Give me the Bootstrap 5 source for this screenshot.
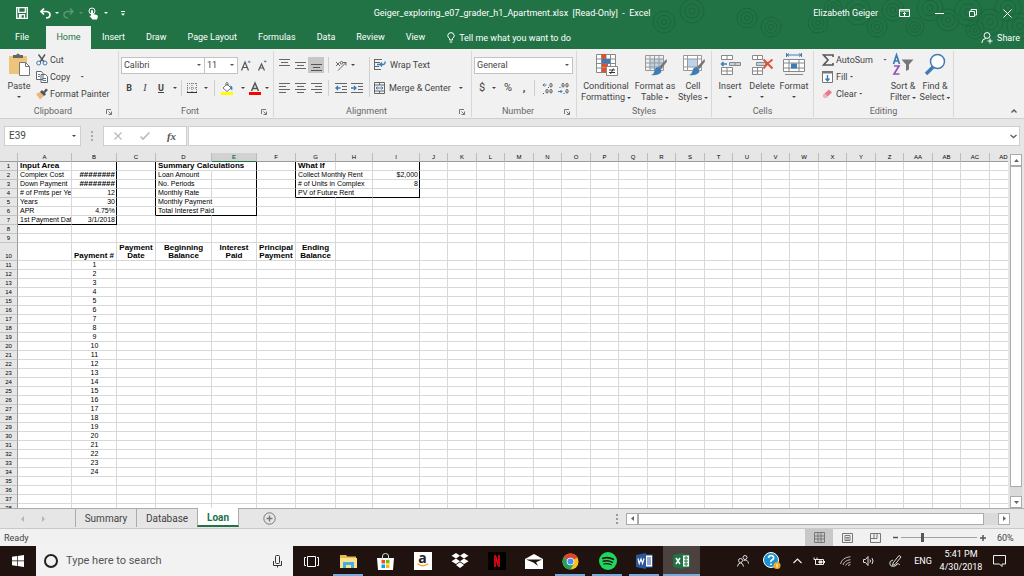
<!DOCTYPE html>
<html lang="en">
<head>
<meta charset="utf-8">
<meta name="viewport" content="width=device-width, initial-scale=1">
<title>Geiger_exploring_e07_grader_h1_Apartment.xlsx - Excel</title>
<link href="https://cdn.jsdelivr.net/npm/bootstrap@5.3.0/dist/css/bootstrap.min.css" rel="stylesheet">
<style>
:root { --green:#217346; --ink:#444; --line:#d2d2d2; }
body { font-family:Roboto,"Open Sans",sans-serif; font-size:9px; line-height:12px; color:var(--ink); background:#e6e6e6; }
button { border:0; background:none; padding:0; color:inherit; font:inherit; line-height:inherit; white-space:nowrap; display:inline-flex; align-items:center; justify-content:center; flex:none; }
svg { display:block; flex:none; overflow:visible; }
.s8 { width:8px } .s12 { width:12px } .s14 { width:14px } .s16 { width:16px } .s20 { width:20px } .s24 { width:24px } .s28 { width:28px } .s34 { width:34px } .s36 { width:36px }
.caret { width:4px; height:2px; background:currentColor; clip-path:polygon(0 0,100% 0,50% 100%); flex:none; display:inline-block; }

.topbar { position:relative; background:var(--green); color:#fff; }
.topbar > div, .topbar > nav { position:relative; }
.rings { position:absolute; right:0; top:0; height:49px; width:380px; overflow:hidden; pointer-events:none; }
.titlebar { height:26px; display:grid; grid-template-columns:1fr auto 1fr; }
.menubar { height:23px; }
.menubar a { color:#fff; text-decoration:none; height:23px; line-height:22px; }
.menubar a.active { background:#f1f1f1; color:var(--green); width:45px; text-align:center; }
.filetab { width:46px; padding-left:15px; }
.menus { gap:21px; padding:0 22px 0 11px; }

.ribbon { background:#f1f1f1; height:70px; border-bottom:1px solid #cfcfcf; }
.group { height:66px; margin-top:2px; border-right:1px solid #d8d8d8; display:flex; flex-direction:column; flex:none; }
.group-body { height:54px; display:flex; padding-left:2px; }
.group-name { height:12px; display:flex; justify-content:center; align-items:end; color:#666; }
.group-name.launch { display:grid; grid-template-columns:1fr 12px; text-align:center; }
.group-name.launch svg { margin-bottom:2px; }
.g-clip { width:119px } .g-font { width:155px } .g-align { width:198px } .g-num { width:105px } .g-style { width:135px } .g-cell { width:102px } .g-edit { width:140px }
.bigbtn { flex-direction:column; justify-content:flex-start; line-height:11px; padding-top:2px; }
.bigbtn svg { margin-bottom:5px; }
.bigbtn .caret { margin-top:4px; }
.bigbtn span .caret { margin:0 0 1px 2px; }
.b32 { width:32px } .b44 { width:44px } .b54 { width:54px }
.stack { display:flex; flex-direction:column; }
.stack button { height:17px; justify-content:flex-start; gap:2px; }
.two { display:flex; flex-direction:column; gap:7px; padding-top:6px; }
.two > div { display:flex; align-items:center; height:16px; }
.vsep { width:1px; height:16px; background:#d0d0d0; flex:none; }
.vsep.tall { height:40px; margin-top:6px; }
.pressed { background:#c6c6c6; height:16px; }
.combo { appearance:none; height:17px; border:1px solid #c3c3c3; border-radius:0; background:#fff url("data:image/svg+xml,%3Csvg xmlns='http://www.w3.org/2000/svg' width='4' height='2'%3E%3Cpath d='M0 0h4L2 2z' fill='%23555'/%3E%3C/svg%3E") no-repeat right 3px center; padding:0 2px; font:inherit; color:var(--ink); }
.combo.name { width:84px } .combo.size { width:34px; margin-left:-1px } .combo.fmt { width:99px }
.glyph { font-size:11px; }
.serif { font-family:"Liberation Serif",serif; font-size:10px; }

.formula { padding:7px 4px 7px; }
.formula .cellbox, .formula .marks, .formula .fx { height:20px; background:#fff; border:1px solid #cfcfcf; }
.formula input { border:0; outline:0; background:none; padding:0 4px; font:inherit; font-size:10px; color:var(--ink); min-width:0; width:100%; }
.cellbox { width:77px; } .marks { width:84px; margin-right:1px; }
.marks button { width:27px; }
.fx { padding-right:2px; }
.fxmark { font:700 11px "Liberation Serif",serif; color:#555; }

.sheetwrap { min-height:0; background:#e6e6e6; }
.sheet { min-width:0; overflow:hidden; background:#fff; }
.cells { table-layout:fixed; border-collapse:separate; border-spacing:0; width:1018px; font-family:"Liberation Sans",sans-serif; font-size:7px; line-height:8px; color:#000; }
.cells th, .cells td { height:9px; padding:0 1px 0 2px; border-right:1px solid #d8d8d8; border-bottom:1px solid #d8d8d8; white-space:nowrap; }
.cells thead th { padding:0; background:#e6e6e6; border-right-color:#bcbcbc; border-bottom-color:#9b9b9b; text-align:center; font-weight:400; font-size:6px; }
.cells thead th.sel { background:#d2d2d2; color:var(--green); font-weight:700; border-bottom-color:var(--green); }
.cells tbody th { background:#e6e6e6; border-right-color:#9b9b9b; border-bottom-color:#c4c4c4; font-weight:400; font-size:6px; text-align:center; padding:0; }
.cells tr.tall > * { height:18px; vertical-align:bottom; white-space:normal; }
.cells td.hd { text-align:center; padding:0; }
.cells td.hd, .cells td.b, .cells td.hash { font-weight:700; font-size:8px; }
.cells td.r { text-align:right; } .cells td.c { text-align:center; }
.cells td.clip { overflow:hidden; }
.cells td.kr { border-right-color:#000; } .cells td.kb { border-bottom-color:#000; } .cells td.open { border-right-color:transparent; }
.vscroll { width:16px; padding:1px 1px 0 2px; display:flex; flex-direction:column; }
.sbtn { width:12px; height:12px; background:#fff; border:1px solid #ababab; }
.vscroll .thumb { background:#fff; border:1px solid #ababab; width:12px; flex:324 0 0; }
.vscroll .track { background:#dadada; flex:9 0 0; width:12px; }

.sheettabs { height:21px; border-top:1px solid #ababab; background:#e6e6e6; border-bottom:1px solid #c9c9c9; font-size:10px; }
.sheettabs a { color:var(--ink); text-decoration:none; height:19px; line-height:20px; text-align:center; }
.sheettabs a.tab { width:61px; border-left:1px solid #ababab; height:18px; }
.sheettabs a.on { width:42px; background:#fff; color:var(--green); font-weight:700; border-bottom:2px solid var(--green); border-left:1px solid #ababab; border-right:1px solid #ababab; margin-top:-1px; }
.sheetnav { width:75px; padding-left:21px; }
.hwrap { padding-right:14px; }
.hscroll { width:384px; height:12px; }
.hscroll .thumb { background:#fff; border:1px solid #ababab; flex:346 0 0; height:12px; }
.hscroll .track { background:#dadada; flex:14 0 0; height:12px; }

.status { height:17px; background:#f1f1f1; }
.view { width:28px; height:17px; } .view.on { background:#c8c8c8; }
.zoomer { appearance:none; width:76px; height:12px; background:linear-gradient(#a0a0a0,#a0a0a0) center/100% 1px no-repeat; }
.zoomer::-webkit-slider-thumb { appearance:none; width:3px; height:9px; background:#555; }
.pct { width:35px; padding-left:8px; }

.taskbar { height:30px; background:#20130f; color:#fff; }
.taskbar .app { width:37px; height:30px; position:relative; }
.taskbar .run::after { content:""; position:absolute; left:3px; right:4px; bottom:0; height:2px; background:#76a9dc; }
.taskbar .front { background:#4b4240; } .taskbar .front::after { left:0; right:0; }
.search { width:257px; background:#f2f2f2; color:#444; padding:0 11px 0 8px; }
.search input { border:0; background:none; outline:0; font:inherit; font-size:11px; min-width:0; padding:0; }
.search input::placeholder { color:#555; opacity:1; }
.amz { width:18px; height:18px; background:#fff; color:#222; font:700 14px/11px "Open Sans",sans-serif; display:flex; flex-direction:column; align-items:center; }
.tray { padding-right:11px; }
.clock { width:48px; line-height:13px; text-align:center; }
</style>
</head>
<body>
<div class="vh-100 d-flex flex-column overflow-hidden">

<header class="topbar flex-shrink-0">
  <svg class="rings" viewBox="644 0 380 49" fill="none" stroke="#1b663b" id="rings"></svg>
  <div class="titlebar">
    <div class="d-flex align-items-center ps-3">
      <button aria-label="Save"><svg width="12" height="12" viewBox="0 0 12 12" fill="none" stroke="#fff" stroke-width="1.300"><path d="M.7.7h10.6v10.6H.7zM2.700.7v4.600h6.600V.7M3.500 11V7.600h5V11M5 8v3"/></svg></button>
      <button class="ms-2 ps-1" aria-label="Undo"><svg width="11" height="11" viewBox="0 0 11 11" fill="none" stroke="#fff" stroke-width="1.700"><path d="M4 .5L1 3.500l3 3M1 3.500h5.500q3.500.3 3.500 3.300T6 10"/></svg></button>
      <button class="s12" aria-label="Undo list"><i class="caret"></i></button>
      <button class="opacity-25" aria-label="Redo"><svg width="11" height="11" viewBox="0 0 11 11" fill="none" stroke="#fff" stroke-width="1.500"><path d="M7 .5l3 3-3 3M10 3.500H4.500Q1 3.800 1 6.800T5 10"/></svg></button>
      <button class="s14 opacity-25" aria-label="Redo list"><i class="caret"></i></button>
      <button aria-label="Touch mode"><svg width="11" height="13" viewBox="0 0 11 13"><circle cx="4" cy="4" r="3" fill="none" stroke="#fff"/><path d="M3 3.500q1-1 2 0V7l4 1q1 .5.8 2L9 12.500H4.500L1.500 9q.5-1 1.500 0z" fill="#fff"/></svg></button>
      <button class="s14" aria-label="Touch list"><i class="caret"></i></button>
      <button class="s20" aria-label="Customize"><svg width="4" height="5" viewBox="0 0 4 5" fill="#fff"><path d="M0 0h4v1H0zM0 2.500h4L2 4.700z"/></svg></button>
    </div>
    <div class="d-flex align-items-center">Geiger_exploring_e07_grader_h1_Apartment.xlsx&nbsp; [Read-Only]&nbsp; -&nbsp; Excel</div>
    <div class="d-flex align-items-center justify-content-end">
      <span class="pe-1">Elizabeth Geiger</span>
      <button class="s36 ms-1" aria-label="Ribbon display"><svg width="11" height="8" viewBox="0 0 11 8" fill="none" stroke="#fff"><path d="M.5.5h10v7H.5zM.5 2h10M5.500 7V3.500M4 5l1.500-1.500L7 5"/></svg></button>
      <button class="s34" aria-label="Minimize"><svg width="9" height="9" viewBox="0 0 9 9" stroke="#fff"><path d="M0 4.500h9"/></svg></button>
      <button class="s34" aria-label="Restore"><svg width="8" height="8" viewBox="0 0 8 8" fill="none" stroke="#fff"><path d="M.5 2.500h5v5h-5zM2 2V.5h5.500V6H6"/></svg></button>
      <button class="s34" aria-label="Close"><svg width="9" height="9" viewBox="0 0 9 9" stroke="#fff"><path d="M.5.5l8 8M8.500.5l-8 8"/></svg></button>
    </div>
  </div>
  <nav class="menubar d-flex">
    <a href="#" class="filetab">File</a>
    <a href="#" class="active">Home</a>
    <div class="d-flex menus"><a href="#">Insert</a><a href="#">Draw</a><a href="#">Page Layout</a><a href="#">Formulas</a><a href="#">Data</a><a href="#">Review</a><a href="#">View</a></div>
    <a href="#" class="d-flex align-items-center gap-1"><svg width="8" height="11" viewBox="0 0 8 11" fill="none" stroke="#fff"><path d="M2.500 8V6.500Q.5 5 .8 3.300 1.300.7 4 .6q2.700.1 3.200 2.700Q7.500 5 5.500 6.500V8zM2.700 10h2.600"/></svg>Tell me what you want to do</a>
    <a href="#" class="ms-auto pe-1 d-flex align-items-center gap-1"><svg width="12" height="12" viewBox="0 0 12 12" fill="none" stroke="#fff"><circle cx="6" cy="3.500" r="2.900"/><path d="M.8 11q.2-4 4-4.600M6.500 9h5M9 6.500v5"/></svg>Share</a>
  </nav>
</header>

<section class="ribbon d-flex flex-shrink-0 overflow-hidden">
  <div class="group g-clip">
    <div class="group-body">
      <button class="bigbtn s34"><svg width="22" height="23" viewBox="0 0 22 23"><path d="M1 3h18v18H1z" fill="#ecc57c"/><path d="M5 2h3q2-3 4 0h3v3H5z" fill="#666"/><path d="M11.500 9.500h6l4 4v9h-10z" fill="#fff" stroke="#777"/><path d="M17.500 9.500v4h4" fill="none" stroke="#777"/></svg>Paste<i class="caret"></i></button>
      <div class="stack ps-0 ms-0">
        <button><svg width="12" height="12" viewBox="0 0 12 12" fill="none"><path d="M2.500.5L8 8M9 .5L4 8" stroke="#555" stroke-width="1.400"/><circle cx="2.700" cy="9" r="2" stroke="#3f7cb5"/><circle cx="9" cy="9" r="2" stroke="#3f7cb5"/></svg>Cut</button>
        <button><svg width="12" height="12" viewBox="0 0 12 12" fill="#fff" stroke="#666"><path d="M.5.5h5l1.500 2v6H.5zM5 3.500h4.500l2 2v6H5z"/><path d="M2 3.500h2M2 5.500h2M6.500 7.500H10M6.500 9.500H10" stroke="#3f7cb5"/></svg>Copy<i class="caret ms-2"></i></button>
        <button><svg width="12" height="12" viewBox="0 0 12 12"><path d="M0 6l4-2 4 4-4 3.500z" fill="#ecb97a"/><path d="M4 4l2-2 1.500 1.500L10 .5 12 2 9 5l1 1.500L8 8z" fill="#555"/></svg>Format Painter</button>
      </div>
    </div>
    <div class="group-name launch">Clipboard<svg width="6" height="6" viewBox="0 0 6 6" fill="none" stroke="#777"><path d="M.5 5V.5H5M2.500 2.500l3 3M5.500 2.500v3h-3"/></svg></div>
  </div>

  <div class="group g-font">
    <div class="group-body">
      <div class="two">
        <div><select class="combo name" aria-label="Font"><option>Calibri</option></select><select class="combo size" aria-label="Font size"><option>11</option></select>
          <button class="s16" aria-label="Grow font"><svg width="10" height="11" viewBox="0 0 10 11" fill="none" stroke="#555" stroke-width="1.200"><path d="M.5 10.500L4 2l3.500 8.500M2 7.500h4"/><path d="M6.500 2.500l1.700-2 1.700 2z" fill="#3f7cb5" stroke="none"/></svg></button>
          <button class="s16" aria-label="Shrink font"><svg width="9" height="11" viewBox="0 0 9 11" fill="none" stroke="#555" stroke-width="1.200"><path d="M.5 10.500L3.500 4l3 6.500M2 8h3"/><path d="M5.500.7h3.400L7.200 2.700z" fill="#3f7cb5" stroke="none"/></svg></button></div>
        <div><button class="s16 fw-bold">B</button><button class="s16 fst-italic"><span class="serif">I</span></button><button class="s16 fw-bold text-decoration-underline">U</button><button class="s12" aria-label="Underline list"><i class="caret"></i></button><span class="vsep"></span>
          <button class="s20" aria-label="Borders"><svg width="10" height="10" viewBox="0 0 10 10" fill="none" stroke="#777" stroke-dasharray="1 1"><path d="M.5 0v9M5 0v9M9.500 0v9M0 .5h10M0 5h10"/><path d="M0 9.500h10" stroke="#333" stroke-dasharray="none"/></svg></button><button class="s8" aria-label="Border list"><i class="caret"></i></button><span class="vsep ms-1"></span>
          <button class="s24" aria-label="Fill color"><svg width="12" height="13" viewBox="0 0 12 13"><path d="M2 6l4-4 4 4-4 3.500zM5 4V1q1-1 2 0v3" fill="#fff" stroke="#777"/><path d="M9.500 3.500q3 1 1.500 5L9 6z" fill="#3f7cb5"/><path d="M0 10h12v3H0z" fill="#ff0"/></svg></button><button class="s8" aria-label="Fill list"><i class="caret"></i></button>
          <button class="s16" aria-label="Font color"><svg width="12" height="13" viewBox="0 0 12 13"><path d="M2.500 9L6 1l3.500 8M4 6.500h4" fill="none" stroke="#555" stroke-width="1.500"/><path d="M0 10h12v3H0z" fill="red"/></svg></button><button class="s8" aria-label="Color list"><i class="caret"></i></button></div>
      </div>
    </div>
    <div class="group-name launch">Font<svg width="6" height="6" viewBox="0 0 6 6" fill="none" stroke="#777"><path d="M.5 5V.5H5M2.500 2.500l3 3M5.500 2.500v3h-3"/></svg></div>
  </div>

  <div class="group g-align">
    <div class="group-body">
      <div class="two">
        <div><button class="s16" aria-label="Top"><svg width="11" height="12" viewBox="0 0 11 12" stroke="#666"><path d="M0 .5h11M2 3.500h7M0 6.500h11"/></svg></button><button class="s16" aria-label="Middle"><svg width="11" height="12" viewBox="0 0 11 12" stroke="#666"><path d="M0 3.500h11M2 6.500h7M0 9.500h11"/></svg></button><button class="s16 pressed" aria-label="Bottom"><svg width="11" height="12" viewBox="0 0 11 12" stroke="#555"><path d="M0 5.500h11M2 8.500h7M0 11.500h11"/></svg></button><span class="vsep mx-1"></span>
          <button class="s16" aria-label="Orientation"><svg width="12" height="11" viewBox="0 0 12 11" fill="none" stroke="#666"><path d="M3 10.500L11 2.500M8 2.500h3v3M1 2l4 4M1 6l3.500-3.500"/><circle cx="6.500" cy="2.800" r="1.300"/></svg></button><button class="s8" aria-label="Orientation list"><i class="caret"></i></button></div>
        <div><button class="s16" aria-label="Left"><svg width="11" height="10" viewBox="0 0 11 10" stroke="#666"><path d="M0 .5h11M0 3.500h7M0 6.500h11M0 9.500h7"/></svg></button><button class="s16" aria-label="Center"><svg width="11" height="10" viewBox="0 0 11 10" stroke="#666"><path d="M0 .5h11M2 3.500h7M0 6.500h11M2 9.500h7"/></svg></button><button class="s16" aria-label="Right"><svg width="11" height="10" viewBox="0 0 11 10" stroke="#666"><path d="M0 .5h11M4 3.500h7M0 6.500h11M4 9.500h7"/></svg></button><span class="vsep mx-1"></span>
          <button class="s16" aria-label="Decrease indent"><svg width="12" height="10" viewBox="0 0 12 10" fill="none" stroke="#666"><path d="M0 .5h12M7 3.500h5M7 6.500h5M0 9.500h12"/><path d="M5.500 5H1M3 3L1 5l2 2" stroke="#3f7cb5" stroke-width="1.300"/></svg></button><button class="s16" aria-label="Increase indent"><svg width="12" height="10" viewBox="0 0 12 10" fill="none" stroke="#666"><path d="M0 .5h12M7 3.500h5M7 6.500h5M0 9.500h12"/><path d="M0 5h5M3 3l2 2-2 2" stroke="#3f7cb5" stroke-width="1.300"/></svg></button></div>
      </div>
      <span class="vsep tall mx-1"></span>
      <div class="two">
        <div><button class="gap-1"><svg width="12" height="12" viewBox="0 0 12 12" fill="none" stroke="#666"><path d="M.5 0v11M0 .5h8M0 3.500h6M0 7.500h5M0 10.500h7"/><path d="M3 5.500h6.500q2-.5 1.500-3M8 7.500l-2-2 2-2" stroke="#3f7cb5" stroke-width="1.300"/></svg>Wrap Text</button></div>
        <div><button class="gap-1"><svg width="11" height="12" viewBox="0 0 11 12" fill="none" stroke="#666"><path d="M.5.5h10v11H.5zM.5 3h10M.5 9h10M5.500.5V3M5.500 9v2.500"/><path d="M2 6h7M3.500 4.500L2 6l1.500 1.500M7.500 4.500L9 6 7.500 7.500" stroke="#3f7cb5"/></svg>Merge &amp; Center<i class="caret ms-1"></i></button></div>
      </div>
    </div>
    <div class="group-name launch">Alignment<svg width="6" height="6" viewBox="0 0 6 6" fill="none" stroke="#777"><path d="M.5 5V.5H5M2.500 2.500l3 3M5.500 2.500v3h-3"/></svg></div>
  </div>

  <div class="group g-num">
    <div class="group-body">
      <div class="two">
        <div><select class="combo fmt" aria-label="Number format"><option>General</option></select></div>
        <div><button class="s16 glyph">$</button><button class="s8" aria-label="Currency list"><i class="caret"></i></button><button class="s20 glyph">%</button><button class="s12 glyph fw-bold">,</button><span class="vsep mx-1"></span>
          <button class="s16" aria-label="Increase decimal"><svg width="11" height="11" viewBox="0 0 11 11" fill="none" stroke="#555"><path d="M4.500 2H.8M2.500.5L1 2l1.500 1.500" stroke="#3f7cb5"/><rect x="8" y=".5" width="2" height="3.500" rx="1"/><path d="M6 4.500h1M1 10.500h1"/><rect x="4" y="6.500" width="2" height="3.500" rx="1"/><rect x="8" y="6.500" width="2" height="3.500" rx="1"/></svg></button><button class="s16" aria-label="Decrease decimal"><svg width="11" height="11" viewBox="0 0 11 11" fill="none" stroke="#555"><path d="M0 8.500h4M2.500 7L4 8.500 2.500 10" stroke="#3f7cb5"/><rect x="4" y=".5" width="2" height="3.500" rx="1"/><rect x="8" y=".5" width="2" height="3.500" rx="1"/><path d="M1.500 4.500h1M5.500 10.500h1"/><rect x="8" y="6.500" width="2" height="3.500" rx="1"/></svg></button></div>
      </div>
    </div>
    <div class="group-name launch">Number<svg width="6" height="6" viewBox="0 0 6 6" fill="none" stroke="#777"><path d="M.5 5V.5H5M2.500 2.500l3 3M5.500 2.500v3h-3"/></svg></div>
  </div>

  <div class="group g-style">
    <div class="group-body">
      <button class="bigbtn b54"><svg width="23" height="23" viewBox="0 0 23 23"><path d="M1.500 1.500h19v18h-19zM6.500 1.500v18M11 1.500v18M15.500 1.500v18M1.500 6h19M1.500 10.500h19M1.500 15h19" fill="#fff" stroke="#888"/><path d="M7 1h4v5H7zM7 10.500h6v4H7zM7 15h4v4.500H7z" fill="#e0512f"/><path d="M7 6h8v4.500H7z" fill="#3f7cb5"/><path d="M11.500 13.500h11v9h-11z" fill="#fff" stroke="#888"/><path d="M14 17h6M14 19.500h6M18.500 15.500l-3 5.500" stroke="#333"/></svg><span>Conditional</span><span>Formatting<i class="caret"></i></span></button>
      <button class="bigbtn b44"><svg width="23" height="23" viewBox="0 0 23 23"><path d="M5.500 6h13v10h-13z" fill="#bcd3ea"/><path d="M1.500 2.500h18v15h-18zM6 2.500v15M10.500 2.500v15M15 2.500v15M1.500 6h18M1.500 10h18M1.500 14h18" fill="none" stroke="#999"/><path d="M22.500 6L15 14l2 2.500 6-8z" fill="#777"/><path d="M15 14q-4 0-4.500 4Q10 21 7 22q6 1 9-1.500 2-2 1-4z" fill="#3f7cb5"/></svg><span>Format as</span><span>Table<i class="caret"></i></span></button>
      <button class="bigbtn b32"><svg width="23" height="23" viewBox="0 0 23 23"><path d="M1.500 2.500h18v15h-18z" fill="#fff"/><path d="M5.500 6h10v8h-10z" fill="#bcd3ea"/><path d="M1.500 2.500h18v15h-18zM5.500 2.500v15M15.500 2.500v15M1.500 6h18M1.500 14h18" fill="none" stroke="#999"/><path d="M22.500 6L15 14l2 2.500 6-8z" fill="#777"/><path d="M15 14q-4 0-4.500 4Q10 21 7 22q6 1 9-1.500 2-2 1-4z" fill="#3f7cb5"/></svg><span>Cell</span><span>Styles<i class="caret"></i></span></button>
    </div>
    <div class="group-name">Styles</div>
  </div>

  <div class="group g-cell">
    <div class="group-body">
      <button class="bigbtn b32"><svg width="22" height="23" viewBox="0 0 22 23" fill="#fff" stroke="#888"><path d="M2.500 2.500h11v4h-11zM8 2.500v4M2.500 14.500h11v7h-11zM8 14.500v7M2.500 18h11"/><path d="M10.500 9.500h11v3h-11zM16 9.500v3" fill="#bcd3ea"/><path d="M8 11H2.500M4.500 9L2.500 11l2 2" fill="none" stroke="#3f7cb5" stroke-width="1.500"/></svg>Insert<i class="caret"></i></button>
      <button class="bigbtn b32"><svg width="22" height="23" viewBox="0 0 22 23" fill="#fff" stroke="#888"><path d="M1.500 2.500h10v4h-10zM6.500 2.500v4M1.500 14.500h10v7h-10zM6.500 14.500v7M1.500 18h10"/><path d="M5.500 9.500h9v3h-9z" fill="#bcd3ea"/><path d="M12.500 6.500l9 9M21.500 6.500q-6 4-9 9" fill="none" stroke="#e0512f" stroke-width="2"/></svg>Delete<i class="caret"></i></button>
      <button class="bigbtn b32"><svg width="22" height="23" viewBox="0 0 22 23" fill="#fff" stroke="#888"><path d="M.5 6.500h21v12H.5zM.5 10h21M.5 15h21M6 6.500v12M16 6.500v12M2 21.500h18"/><path d="M8 10.500h6v5H8z" fill="#3f7cb5" stroke="none"/><path d="M3 2h16M3.500 0v4M18.500 0v4M6 .5L4 2l2 1.500M16 .5L18 2l-2 1.500" fill="none" stroke="#3f7cb5"/></svg>Format<i class="caret"></i></button>
    </div>
    <div class="group-name">Cells</div>
  </div>

  <div class="group g-edit">
    <div class="group-body ps-1">
      <div class="stack ps-1">
        <button><svg width="12" height="12" viewBox="0 0 12 12" fill="none" stroke="#555" stroke-width="1.600"><path d="M11 3V1H1.500L6 6l-4.500 5H11V9"/></svg>AutoSum<i class="caret ms-2"></i></button>
        <button><svg width="12" height="12" viewBox="0 0 12 12"><path d="M.5 1.500h10v10H.5z" fill="#fff" stroke="#777"/><path d="M0 0h11v2.500H0z" fill="#777"/><path d="M5.500 4v6M3.500 7.500l2 2.500 2-2.500" fill="none" stroke="#3f7cb5" stroke-width="1.400"/></svg>Fill<i class="caret"></i></button>
        <button><svg width="12" height="12" viewBox="0 0 12 12"><path d="M1 7l6-5.500 3 3L4 10H2.500L1 8.500z" fill="#e8798c"/><path d="M1 7l2-1.500 3 3L4 10H2.500L1 8.500z" fill="#f3b4be"/></svg>Clear<i class="caret"></i></button>
      </div>
      <button class="bigbtn b32 ms-auto"><svg width="22" height="23" viewBox="0 0 22 23" fill="none" stroke-width="1.700"><path d="M1.500 11L4.500 2l3 9M2.500 8h4" stroke="#3f7cb5"/><path d="M2 13h5l-5 8h5.500" stroke="#9154b5"/><path d="M9.500 6.500h12l-4.500 5v5l-3 1.500v-6.500z" fill="#777"/></svg><span>Sort &amp;</span><span>Filter<i class="caret"></i></span></button>
      <button class="bigbtn b32 me-1"><svg width="22" height="23" viewBox="0 0 22 23"><path d="M9 14l-7 7" stroke="#3f7cb5" stroke-width="3.500"/><circle cx="13.500" cy="8.500" r="7" fill="#fff" stroke="#3f7cb5" stroke-width="1.500"/></svg><span>Find &amp;</span><span>Select<i class="caret"></i></span></button>
    </div>
    <div class="group-name">Editing</div>
  </div>
  <button class="ms-auto align-self-end s20" aria-label="Collapse ribbon"><svg width="6" height="12" viewBox="0 0 6 12" fill="none" stroke="#555" stroke-width="1.300"><path d="M.5 6.500L3 4l2.500 2.500"/></svg></button>
</section>

<div class="formula d-flex align-items-center flex-shrink-0">
  <div class="cellbox d-flex align-items-center pe-1"><input aria-label="Name box" value="E39"><i class="caret"></i></div>
  <svg width="22" height="12" viewBox="0 0 22 12" fill="#aaa"><path d="M10 1h2v2h-2zM10 5h2v2h-2zM10 9h2v2h-2z"/></svg>
  <div class="marks d-flex">
    <button aria-label="Cancel"><svg width="8" height="8" viewBox="0 0 8 8" stroke="#bbb" stroke-width="1.400"><path d="M.5.5l7 7M7.500.5l-7 7"/></svg></button>
    <button aria-label="Enter"><svg width="10" height="8" viewBox="0 0 10 8" fill="none" stroke="#bbb" stroke-width="1.600"><path d="M.5 4.500L3 7 9.500.5"/></svg></button>
    <button aria-label="Insert function"><span class="fxmark"><i>fx</i></span></button>
  </div>
  <div class="fx d-flex align-items-center flex-grow-1"><input aria-label="Formula"><svg width="7" height="5" viewBox="0 0 7 5" fill="none" stroke="#666" stroke-width="1.500"><path d="M.5 1l3 2.500 3-2.500"/></svg></div>
</div>

<main class="sheetwrap d-flex flex-grow-1">
  <div class="sheet flex-grow-1"><table class="cells" id="cells"></table></div>
  <div class="vscroll">
    <button class="sbtn" aria-label="Scroll up"><svg width="5" height="3" viewBox="0 0 5 3" fill="#666"><path d="M0 3h5L2.500 0z"/></svg></button>
    <div class="thumb"></div><div class="track"></div>
    <button class="sbtn" aria-label="Scroll down"><svg width="5" height="3" viewBox="0 0 5 3" fill="#666"><path d="M0 0h5L2.500 3z"/></svg></button>
  </div>
</main>

<div class="sheettabs d-flex flex-shrink-0">
  <div class="sheetnav d-flex align-items-center"><svg width="24" height="6" viewBox="0 0 24 6" fill="#b5b5b5"><path d="M3 0v6L0 3zM21 0v6l3-3z"/></svg></div>
  <a href="#" class="tab">Summary</a><a href="#" class="tab">Database</a><a href="#" class="on">Loan</a>
  <button class="px-4" aria-label="New sheet"><svg width="13" height="13" viewBox="0 0 13 13" fill="none" stroke="#777"><circle cx="6.500" cy="6.500" r="5.700"/><path d="M3.500 6.500h6M6.500 3.500v6" stroke-width="1.400"/></svg></button>
  <div class="ms-auto d-flex align-items-center hwrap">
    <svg width="2" height="10" viewBox="0 0 2 10" class="me-2" fill="#999"><path d="M0 0h2v2H0zM0 4h2v2H0zM0 8h2v2H0z"/></svg>
    <div class="hscroll d-flex">
      <button class="sbtn" aria-label="Scroll left"><svg width="3" height="5" viewBox="0 0 3 5" fill="#666"><path d="M3 0v5L0 2.500z"/></svg></button>
      <div class="thumb"></div><div class="track"></div>
      <button class="sbtn" aria-label="Scroll right"><svg width="3" height="5" viewBox="0 0 3 5" fill="#666"><path d="M0 0v5l3-2.500z"/></svg></button>
    </div>
  </div>
</div>

<div class="status d-flex align-items-center flex-shrink-0">
  <span class="ps-1 me-auto">Ready</span>
  <button class="view on" aria-label="Normal"><svg width="11" height="11" viewBox="0 0 11 11" fill="none" stroke="#777"><path d="M.5.5h10v10H.5zM.5 4h10M.5 7h10M4 .5v10M7 .5v10"/></svg></button>
  <button class="view" aria-label="Page layout"><svg width="11" height="10" viewBox="0 0 11 10" fill="none" stroke="#777"><path d="M.5.5h10v9H.5zM3 2.500h5v5H3zM4 4.500h3M4 6h3"/></svg></button>
  <button class="view" aria-label="Page break"><svg width="11" height="10" viewBox="0 0 11 10" fill="none" stroke="#777"><path d="M.5.5h10v9H.5zM.5 5.500h6.500V.5M4 .5v5"/></svg></button>
  <button class="s12" aria-label="Zoom out"><svg width="5" height="5" viewBox="0 0 5 5" stroke="#555" stroke-width="1.500"><path d="M0 2.500h5"/></svg></button>
  <input class="zoomer" type="range" min="0" max="100" value="28" aria-label="Zoom">
  <button class="s12" aria-label="Zoom in"><svg width="6" height="6" viewBox="0 0 6 6" stroke="#555" stroke-width="1.500"><path d="M0 3h6M3 0v6"/></svg></button>
  <span class="pct">60%</span>
</div>

<footer class="taskbar d-flex flex-shrink-0">
  <button class="s36" aria-label="Start"><svg width="12" height="12" viewBox="0 0 12 12" fill="#fff"><path d="M0 1.700L5 1v4.600H0zM5.700.9L12 0v5.600H5.700zM0 6.300h5V11l-5-.7zM5.700 6.300H12V12l-6.300-.9z"/></svg></button>
  <label class="search d-flex align-items-center"><svg class="me-2" width="14" height="14" viewBox="0 0 14 14" fill="none"><circle cx="7" cy="7" r="6" stroke="#222" stroke-width="2"/></svg><input class="flex-grow-1" placeholder="Type here to search" aria-label="Search"><svg width="9" height="13" viewBox="0 0 9 13" fill="none" stroke="#333"><rect x="2.500" y=".5" width="4" height="8" rx="1"/><path d="M.5 6v4.500h8V6M4.500 10.500v2"/></svg></label>
  <button class="app" aria-label="Task view"><svg width="15" height="11" viewBox="0 0 15 11" fill="none" stroke="#fff"><path d="M3.500.5h8v10h-8zM2 1.500H.5v8H2M13 1.500h1.500v8H13"/></svg></button>
  <button class="app run" aria-label="File Explorer"><svg width="17" height="15" viewBox="0 0 17 15"><path d="M0 1h6l1.500 1.500H16V14H0z" fill="#e9b94a"/><path d="M0 4h17v10H0z" fill="#fbe08d"/><path d="M3 14V8h11v6h-3v-3H6v3z" fill="#43b0e4"/></svg></button>
  <button class="app" aria-label="Store"><svg width="17" height="17" viewBox="0 0 17 17"><path d="M0 5h17l-1 12H1z" fill="#fff"/><path d="M5.500 7V3q0-2.500 3-2.500t3 2.500v4" fill="none" stroke="#ddd"/><path d="M4.500 7h3.500v3.500H4.500z" fill="#f25022"/><path d="M9 7h3.500v3.500H9z" fill="#7fba00"/><path d="M4.500 11.500h3.500V15H4.500z" fill="#00a4ef"/><path d="M9 11.500h3.500V15H9z" fill="#ffb900"/></svg></button>
  <button class="app" aria-label="Amazon"><span class="amz">a<svg width="12" height="4" viewBox="0 0 12 4" fill="none" stroke="#f90" stroke-width="1.300"><path d="M.5.8q5.500 4 10.500 0"/></svg></span></button>
  <button class="app" aria-label="Dropbox"><svg width="18" height="16" viewBox="0 0 18 16" fill="#fff"><path d="M5 0l4 2.700-4 2.800L.5 2.700zM13 0l4.500 2.700L13 5.500 9 2.700zM5 5.500l4 2.800-4 2.700L.5 8.300zM13 5.500l4.500 2.800L13 11 9 8.300zM5 12l4-2.700 4 2.700-4 3z"/></svg></button>
  <button class="app" aria-label="Netflix"><svg width="18" height="18" viewBox="0 0 18 18"><path d="M0 0h18v18H0z" fill="#000"/><path d="M6 3h2l4 12h-2z" fill="#e50914"/><path d="M6 3h2v12H6zM10 3h2v12h-2z" fill="#c4070f"/></svg></button>
  <button class="app" aria-label="Mail"><svg width="18" height="15" viewBox="0 0 18 15"><path d="M0 5l9-5 9 5v10H0z" fill="#fff"/><path d="M1 5.500h16L9.500 9z" fill="#20130f"/><path d="M10 6l3 6-4-3z" fill="#20130f"/></svg></button>
  <button class="app run" aria-label="Chrome"><svg width="17" height="17" viewBox="0 0 18 18"><circle cx="9" cy="9" r="8.500" fill="#fbc116"/><path d="M9 9L1.600 4.800A8.500 8.500 0 0 1 16.400 4.800z" fill="#df4332"/><path d="M9 9L1.600 4.800A8.500 8.500 0 0 0 9 17.500l3.700-6.400z" fill="#25a05c"/><path d="M9 5h7.500l-.5-1.500H9z" fill="#df4332"/><circle cx="9" cy="9" r="4" fill="#fff"/><circle cx="9" cy="9" r="3.200" fill="#4a8af4"/></svg></button>
  <button class="app run" aria-label="Spotify"><svg width="18" height="18" viewBox="0 0 18 18" fill="none" stroke="#20130f" stroke-linecap="round"><circle cx="9" cy="9" r="9" fill="#1ed760" stroke="none"/><path d="M3.800 6.300q5.500-1.600 10.500 1" stroke-width="1.800"/><path d="M4.300 9.300q4.700-1.300 9 1" stroke-width="1.500"/><path d="M4.700 12q4-1 7.500.8" stroke-width="1.200"/></svg></button>
  <button class="app run" aria-label="Word"><svg width="17" height="16" viewBox="0 0 17 16"><path d="M9 2h7.500v12H9z" fill="#fff" stroke="#2b579a"/><path d="M11 5h4M11 7h4M11 9h4M11 11h4" stroke="#2b579a"/><path d="M0 2l10-2v16L0 14z" fill="#2b579a"/><path d="M2 5.500l1.200 5L5 6l1.500 4.500L8 5.500" fill="none" stroke="#fff" stroke-width="1.200"/></svg></button>
  <button class="app run front" aria-label="Excel"><svg width="17" height="16" viewBox="0 0 17 16"><path d="M9 2h7.500v12H9z" fill="#fff" stroke="#217346"/><path d="M11 5h4M11 8h4M11 11h4M13 3v10" stroke="#217346"/><path d="M0 2l10-2v16L0 14z" fill="#217346"/><path d="M3 5l4 6M7 5l-4 6" fill="none" stroke="#fff" stroke-width="1.500"/></svg></button>
  <div class="ms-auto d-flex align-items-center tray">
    <button class="s24" aria-label="People"><svg width="12" height="12" viewBox="0 0 12 12" fill="none" stroke="#ddd"><circle cx="3.500" cy="5.500" r="2"/><path d="M.5 11.500q.5-3.500 3-3.500t3 3.500"/><circle cx="8" cy="2.500" r="2"/><path d="M6.500 5.500q4.500-1.500 5 3"/></svg></button>
    <button class="s34" aria-label="Help"><svg width="18" height="18" viewBox="0 0 18 18"><circle cx="8" cy="8" r="7.500" fill="#1b93d2" stroke="#fff"/><path d="M5.500 6q.3-2.500 2.700-2.500T10.700 6Q10.500 7.200 9 8T8 10M8 11.500v1.500" fill="none" stroke="#fff" stroke-width="1.600"/><circle cx="14" cy="13.500" r="3.500" fill="#efaa28"/><path d="M14 12v3.500" stroke="#fff"/></svg></button>
    <button class="s16" aria-label="Hidden icons"><svg width="9" height="6" viewBox="0 0 9 6" fill="none" stroke="#eee" stroke-width="1.200"><path d="M.5 5l4-4 4 4"/></svg></button>
    <button class="s28" aria-label="Battery"><svg width="12" height="9" viewBox="0 0 12 9" fill="none" stroke="#eee"><path d="M3.500 2.500h7v5H2.500V5M11.500 4v2M1 .5v2h3v-2M2.500 2.500V5"/><path d="M6 4h3v2H6z" fill="#eee"/></svg></button>
    <button class="s24" aria-label="Wi-Fi"><svg width="11" height="10" viewBox="0 0 11 10" fill="none" stroke="#bbb"><path d="M.5 8Q2 1.500 10.500.7M3 9q1-4.500 7.500-5.300M5.500 9.500q.8-2.500 5-3.300M8 9.500l2.500-1"/></svg></button>
    <button class="s24" aria-label="Volume"><svg width="12" height="10" viewBox="0 0 12 10" fill="none" stroke="#ddd"><path d="M.5 3.500h2l2.500-3v9l-2.500-3h-2zM7 3.500q1 1.500 0 3M9 2q2 3 0 6"/></svg></button>
    <button class="s28" aria-label="Ink"><svg width="13" height="12" viewBox="0 0 13 12" fill="none" stroke="#ddd"><path d="M4 8l6-7.500 2 1.500-6 7.500-2.500.8zM4 5Q0 6 .8 9t4 2.300 3-2.300q2-1 3 1"/></svg></button>
    <button class="s28">ENG</button>
    <div class="clock">5:41 PM<br>4/30/2018</div>
    <button class="s28" aria-label="Notifications"><svg width="13" height="12" viewBox="0 0 13 12" fill="none" stroke="#eee"><path d="M.5.5h12v8.500H9v2.500L6.500 9h-6z"/></svg></button>
  </div>
</footer>
</div>

<script src="https://cdn.jsdelivr.net/npm/bootstrap@5.3.0/dist/js/bootstrap.bundle.min.js"></script>
<script>
// Title bar decoration: each entry is centre x, centre y, outer radius
const rings = [[664,22,11],[692,11,12],[747,18,10],[771,27,10],[818,23,10],[858,12,13],[877,27,10],[833,8,9],[893,10,11],[930,8,13],[948,20,11],[915,27,9],[968,12,14],[990,22,13],[1008,8,13],[1020,26,13],[975,30,9]];
document.getElementById('rings').innerHTML = rings.map(([x,y,r]) =>
  [r, r*.6, r*.25].map(q => `<circle cx="${x}" cy="${y}" r="${q}"/>`).join('')).join('');

// Column letters and widths
const first = [54,45,39,56,45,39,40,37,47];
const cols = [];
for (let i = 0; i < 30; i++) {
  const name = i < 26 ? String.fromCharCode(65+i) : 'A' + String.fromCharCode(39+i);
  cols.push([name, i < 9 ? first[i] : (i % 2 ? 28 : 29)]);
}
// Cell contents: [text, classes]
const data = {
  A1:['Input Area','b'], A2:['Complex Cost'], A3:['Down Payment'], A4:['# of Pmts per Year','clip'], A5:['Years'], A6:['APR'], A7:['1st Payment Date','clip'],
  B2:['########','r hash'], B3:['########','r hash'], B4:['12','r'], B5:['30','r'], B6:['4.75%','r'], B7:['3/1/2018','r'],
  D1:['Summary Calculations','b open'], D2:['Loan Amount'], D3:['No. Periods'], D4:['Monthly Rate'], D5:['Monthly Payment','open'], D6:['Total Interest Paid','open'],
  G1:['What If','b'], G2:['Collect Monthly Rent','open'], G3:['# of Units in Complex','open'], G4:['PV of Future Rent','open'],
  I2:['$2,000','r'], I3:['8','r'],
  B10:['Payment #','hd'], C10:['Payment Date','hd'], D10:['Beginning Balance','hd'], E10:['Interest Paid','hd'], F10:['Principal Payment','hd'], G10:['Ending Balance','hd']
};
for (let n = 1; n <= 24; n++) data['B' + (n+10)] = [n, 'c'];
// Black outlines of the three input blocks
const outline = (c, r) => {
  let k = '';
  if ((c === 'B' && r <= 7) || ('CE'.includes(c) && r <= 6) || ('FI'.includes(c) && r <= 4)) k += ' kr';
  if (('AB'.includes(c) && r === 7) || ('DE'.includes(c) && r === 6) || ('GHI'.includes(c) && r === 4)) k += ' kb';
  return k;
};
let html = '<colgroup><col style="width:18px">' + cols.map(c => `<col style="width:${c[1]}px">`).join('') + '</colgroup><thead><tr><th></th>' +
  cols.map(c => `<th scope="col"${c[0] === 'E' ? ' class="sel"' : ''}>${c[0]}</th>`).join('') + '</tr></thead><tbody>';
for (let r = 1; r <= 38; r++) {
  html += `<tr${r === 10 ? ' class="tall"' : ''}><th scope="row">${r}</th>`;
  for (const [c] of cols) {
    const d = data[c + r] || ['', ''];
    html += `<td class="${(d[1] || '') + (c.length === 1 ? outline(c, r) : '')}">${d[0]}</td>`;
  }
  html += '</tr>';
}
document.getElementById('cells').innerHTML = html + '</tbody>';
</script>
</body>
</html>
